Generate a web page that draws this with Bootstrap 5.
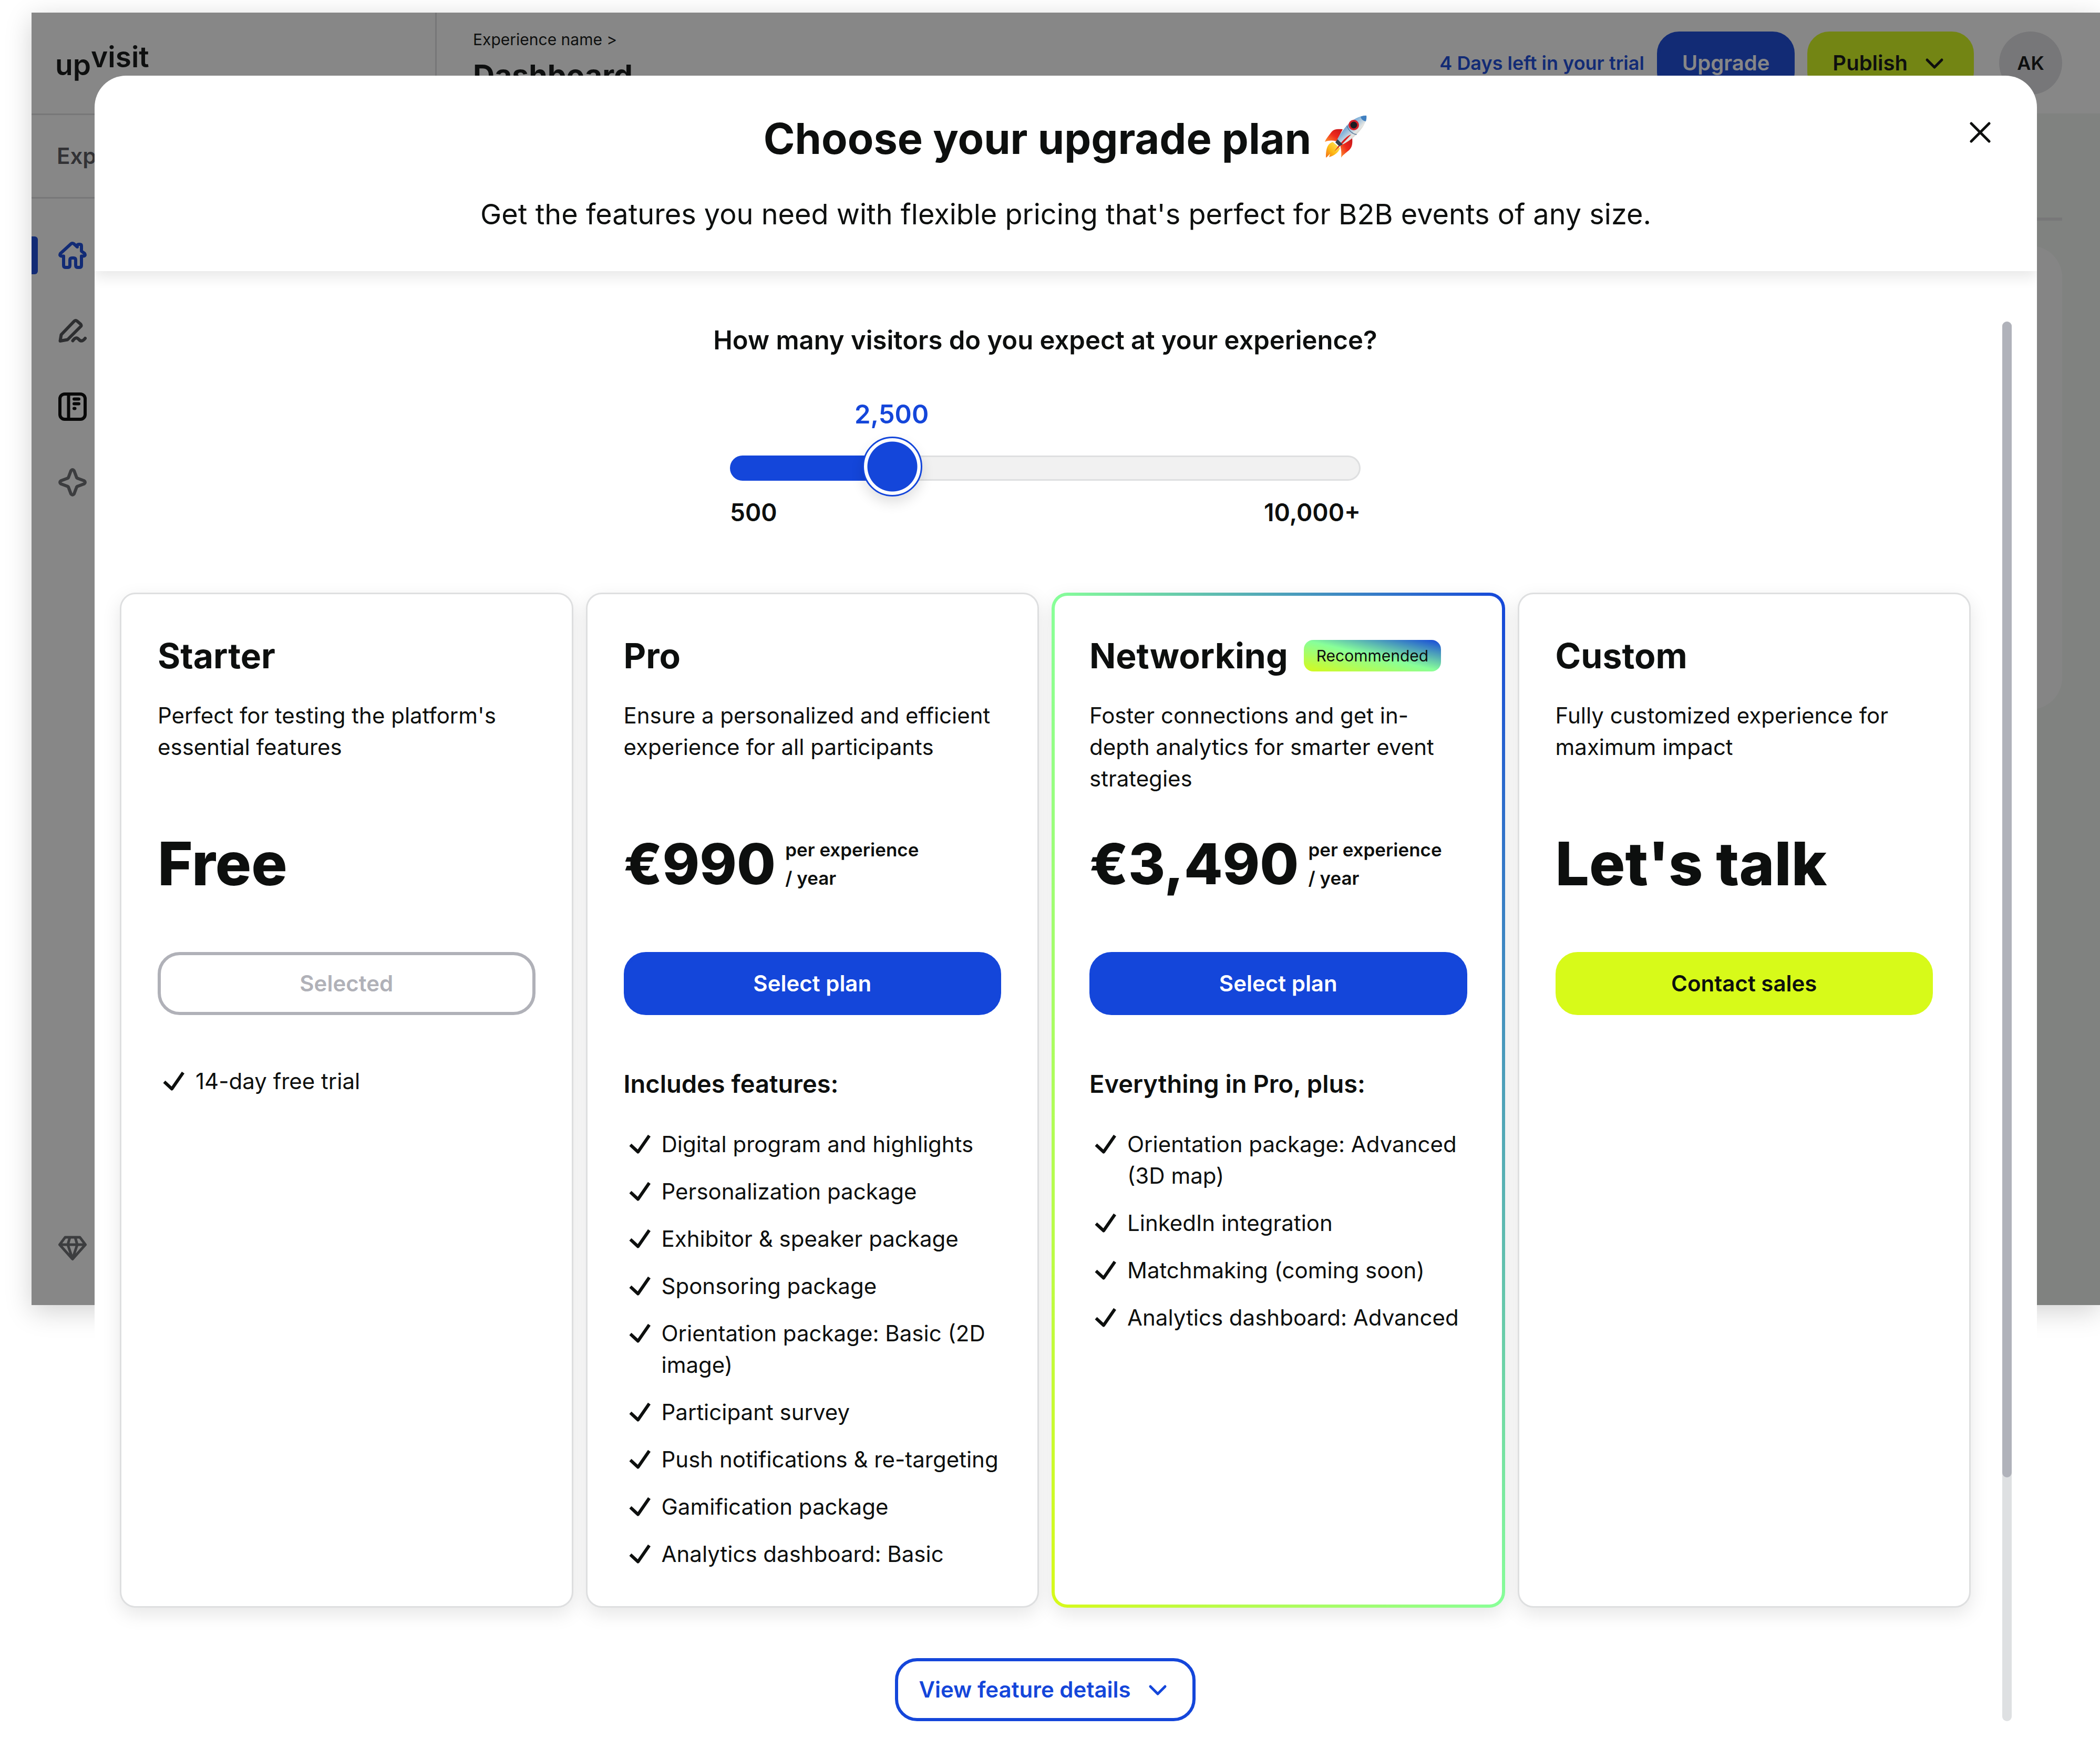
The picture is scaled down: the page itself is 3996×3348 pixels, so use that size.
<!DOCTYPE html>
<html lang="en">
<head>
<meta charset="utf-8">
<meta name="viewport" content="width=device-width, initial-scale=1">
<title>upvisit – Choose your upgrade plan</title>
<link rel="stylesheet" href="https://cdn.jsdelivr.net/npm/bootstrap@5.3.0/dist/css/bootstrap.min.css">
<script defer src="https://cdn.jsdelivr.net/npm/bootstrap@5.3.0/dist/js/bootstrap.bundle.min.js"></script>
<style>
  :root {
    --ink: #0d0f0e;
    --blue: #1446da;
    --lime: #d7fa19;
    --mint: #88ff99;
    --line: #dedfe0;
    --muted: #b0b1b8;
    --brand-gradient: linear-gradient(to top right, var(--lime), var(--mint) 50%, var(--blue));
  }
  body {
    font-family: Inter, "Liberation Sans", sans-serif;
    font-size: 42px;
    line-height: 60px;
    color: var(--ink);
    background: #fff;
  }
  svg { display: block; flex: none; fill: none; stroke: currentColor; stroke-width: 6; stroke-linecap: round; stroke-linejoin: round; }
  .rocket { stroke: none; }
  h1, h2, h3, p, ul { margin: 0; }

  /* The dashboard and the dialog share one grid cell, the dialog on top. */
  .stage { display: grid; overflow: hidden; }
  .stage > * { grid-area: 1 / 1; min-width: 0; }

  /* Dashboard behind the dialog */
  .app-frame {
    position: relative;
    align-self: start;
    min-height: 2460px;
    margin: 24px 0 0 60px;
    box-shadow: 0 12px 48px rgba(0, 0, 0, .18);
    background: #f0f4f0;
  }
  .app-dim { position: absolute; inset: 0; background: rgba(16, 16, 16, .5); }
  .side { width: 771px; background: #fff; border-right: 3px solid var(--line); }
  .side-brand { height: 195px; padding: 48px 45px; border-bottom: 3px solid var(--line); }
  .brand { font-size: 55px; font-weight: 600; line-height: 72px; color: var(--ink); text-decoration: none; }
  .brand-up { vertical-align: 15px; }
  .side-project { height: 159px; padding: 48px; border-bottom: 3px solid var(--line); font-weight: 600; color: #55555b; }
  .side-nav { gap: 72px; padding: 72px 0; }
  .side-link { display: flex; align-items: center; height: 72px; padding-left: 51px; color: #696a6f; }
  .side-link.current { color: var(--blue); padding-left: 39px; }
  .side-link.current::before { content: ""; width: 12px; height: 72px; margin-left: -39px; margin-right: 39px; border-radius: 0 6px 6px 0; background: currentColor; }
  .side-link.dark { color: #000; }
  .side-link.edit { color: #4b4c50; }
  .topbar { height: 192px; padding: 30px 72px 0 69px; background: #fff; }
  .crumb { font-size: 30px; line-height: 42px; color: var(--ink); text-decoration: none; }
  .page-title { margin-top: 12px; font-size: 57px; line-height: 72px; font-weight: 700; }
  .top-actions { gap: 24px; padding-top: 6px; }
  .trial { font-size: 36px; font-weight: 600; color: var(--blue); text-decoration: none; }
  .avatar { width: 120px; height: 120px; margin-left: 24px; padding: 0; border: 0; border-radius: 50%; background: #dedee2; font-size: 36px; font-weight: 600; color: var(--ink); }
  .tab-rule { height: 6px; margin-top: 198px; background: var(--line); }
  .dash-pane { padding: 0 72px 0 69px; }
  .dash-panel { height: 882px; margin-top: 48px; border-radius: 60px; background: #fbfbfb; }

  /* Buttons */
  .pill {
    --bs-btn-font-size: 42px;
    --bs-btn-line-height: 60px;
    --bs-btn-font-weight: 600;
    --bs-btn-border-width: 6px;
    --bs-btn-border-radius: 42px;
    --bs-btn-padding-x: 42px;
    --bs-btn-padding-y: 24px;
    --bs-btn-disabled-opacity: 1;
  }
  .pill-top { --bs-btn-font-size: 40px; }
  .pill-blue { --bs-btn-color: #fff; --bs-btn-bg: var(--blue); --bs-btn-border-color: var(--blue); --bs-btn-hover-color: #fff; --bs-btn-hover-bg: #1039b4; }
  .pill-lime { --bs-btn-color: var(--ink); --bs-btn-bg: var(--lime); --bs-btn-border-color: var(--lime); --bs-btn-hover-bg: #c6e80e; }
  .pill-outline { --bs-btn-padding-x: 39px; --bs-btn-color: var(--blue); --bs-btn-bg: #fff; --bs-btn-border-color: var(--blue); --bs-btn-hover-color: #fff; --bs-btn-hover-bg: var(--blue); }
  .pill-chosen { --bs-btn-disabled-color: var(--muted); --bs-btn-disabled-bg: #fff; --bs-btn-disabled-border-color: var(--muted); }
  .with-icon { display: inline-flex; align-items: center; gap: 24px; }

  /* Dialog */
  .plan-dialog { z-index: 1; margin: 144px 120px 0 180px; border-radius: 60px 60px 0 0; background: #fff; overflow: hidden; }
  .dialog-head { position: relative; padding: 72px 72px 66px; text-align: center; box-shadow: 0 12px 24px rgba(0, 0, 0, .09); }
  .dialog-title { gap: 24px; font-size: 81px; line-height: 96px; font-weight: 700; }
  .dialog-sub { margin-top: 54px; font-size: 54px; line-height: 84px; }
  .close-x { position: absolute; top: 72px; right: 72px; padding: 0; border: 0; background: none; color: var(--ink); }
  .dialog-main { gap: 60px; padding: 96px 48px 72px; }
  .scroll-rail { width: 18px; border-radius: 9px; background: #dee0e2; }
  .scroll-grip { border-radius: 9px; background: #b0b2ba; }

  /* Visitor slider */
  .visitors { max-width: 1200px; margin: 72px auto 126px; }
  .question { font-size: 49px; line-height: 72px; font-weight: 600; text-align: center; }
  .visitor-value { display: block; width: 150px; margin-bottom: 12px; margin-left: calc((100% - 114px) * var(--at) - 18px); font-size: 49px; line-height: 66px; font-weight: 600; text-align: center; color: var(--blue); }
  .visitor-range { display: block; width: 100%; height: 114px; margin: 0; background: none; -webkit-appearance: none; appearance: none; }
  .visitor-range::-webkit-slider-runnable-track {
    height: 48px; border: 3px solid transparent; border-radius: 24px;
    background:
      linear-gradient(var(--blue), var(--blue)) 0 0 / calc(57px + (100% - 114px) * var(--at)) 100% no-repeat border-box,
      linear-gradient(#f1f1f1, #f1f1f1) padding-box,
      linear-gradient(var(--line), var(--line)) border-box;
  }
  .visitor-range::-webkit-slider-thumb {
    -webkit-appearance: none; width: 114px; height: 114px; margin-top: -39px; border: 3px solid var(--blue); border-radius: 50%;
    background: radial-gradient(circle, var(--blue) 47px, #fff 48px); box-shadow: 0 12px 24px rgba(0, 0, 0, .12);
  }
  .visitor-ends { font-size: 46px; line-height: 54px; font-weight: 600; }

  /* Plans */
  .plans { --bs-gutter-x: 24px; }
  .plan { height: 100%; padding: 69px; border: 3px solid var(--line); border-radius: 30px; background: #fff; box-shadow: 0 12px 36px rgba(0, 0, 0, .1); }
  .plan-featured { padding: 66px; border: 6px solid transparent; background: linear-gradient(#fff, #fff) padding-box, var(--brand-gradient) border-box; }
  .plan-top { gap: 30px; }
  .plan-name { font-size: 66px; line-height: 96px; font-weight: 700; }
  .plan-tag { padding: 0 24px; border-radius: 18px; background: var(--brand-gradient); font-size: 30px; line-height: 60px; }
  .plan-text { min-height: 180px; margin-top: 36px; }
  .plan-price { gap: 18px; height: 144px; margin: 60px 0 96px; }
  .price-word { font-size: 114px; line-height: 144px; font-weight: 800; }
  .price-sum { font-size: 107px; line-height: 144px; font-weight: 800; }
  .price-unit { font-size: 35px; line-height: 54px; font-weight: 600; }
  .plan-list-title { margin: 96px 0 -45px; font-size: 47px; line-height: 69px; font-weight: 600; }
  .plan-list { display: grid; gap: 30px; margin-top: 96px; }
  .plan-list li { display: flex; gap: 12px; }
  .plan-more { padding-top: 96px; text-align: center; }
</style>
</head>
<body>

<svg class="d-none" aria-hidden="true">
  <symbol id="tick" viewBox="0 0 60 60"><path d="M12.500 31 L27 44.500 L48.500 13.500" stroke-linecap="butt" stroke-linejoin="round"/></symbol>
  <symbol id="chevron" viewBox="0 0 54 54"><path d="M13 21 L27 35 L41 21" stroke-width="5"/></symbol>
</svg>

<div class="stage">

  <div class="app-frame d-flex" inert>
    <aside class="side d-flex flex-column flex-shrink-0">
      <div class="side-brand"><a class="brand" href="#">up<span class="brand-up">visit</span></a></div>
      <div class="side-project">Experience name</div>
      <nav class="side-nav d-flex flex-column flex-grow-1" aria-label="Main">
        <a class="side-link current" href="#" aria-label="Home">
          <svg width="54" height="54" viewBox="0 0 54 54"><path d="M24.500 4.800 L4 23.500 q-2.500 4.500 2 5 H10 V46 q0 4 4 4 h4 q4 0 4-4 V36 q0-4 4-4 h3 q4 0 4 4 v10 q0 4 4 4 h3 q4 0 4-4 V28.500 h4 q4.500-.5 2-5 L44 19 V9 q0-3-3-3 h-2 q-3 0-3 3 v2 L29.500 5 q-2.500-1.800-5-.2z"/></svg>
        </a>
        <a class="side-link edit" href="#" aria-label="Edit">
          <svg width="54" height="54" viewBox="0 0 54 54"><path d="M3.500 46 L5.500 34 L30.500 8 q2.500-2 5 0 l7 6 q2 2.500 0 4.500 L17.500 43.500 Z M27.500 45.500 q6-9 11.500-2.500 t12-2"/></svg>
        </a>
        <a class="side-link dark" href="#" aria-label="Pages">
          <svg width="54" height="54" viewBox="0 0 54 54"><rect x="3" y="3" width="48" height="48" rx="9"/><path d="M19.500 3 V51 M30 12.500 H39 M30 21.500 H39 M30 30.500 H31.500"/></svg>
        </a>
        <a class="side-link" href="#" aria-label="Highlights">
          <svg width="54" height="54" viewBox="0 0 54 54"><path d="M24 5 Q27 1 30 5 L34.500 17 Q35 19 37 19.500 L49 24 Q53 27 49 30 L37 34.500 Q35 35 34.500 37 L30 49 Q27 53 24 49 L19.500 37 Q19 35 17 34.500 L5 30 Q1 27 5 24 L17 19.500 Q19 19 19.500 17 Z"/></svg>
        </a>
        <a class="side-link mt-auto" href="#" aria-label="Plans">
          <svg width="54" height="54" viewBox="0 0 54 54"><path stroke-width="5" d="M13 6 H41 L51.500 20 L27 47.500 L2.500 20 Z M2.500 20 H51.500 M22 6 L18 20 L27 47 L36 20 L32 6"/></svg>
        </a>
      </nav>
    </aside>
    <div class="flex-grow-1">
      <header class="topbar d-flex justify-content-between">
        <div>
          <a class="crumb d-block" href="#">Experience name &gt;</a>
          <h2 class="page-title">Dashboard</h2>
        </div>
        <div class="top-actions d-flex align-items-center align-self-start">
          <a class="trial" href="#">4 Days left in your trial</a>
          <button type="button" class="btn pill pill-top pill-blue">Upgrade</button>
          <button type="button" class="btn pill pill-top pill-lime with-icon">Publish <svg width="54" height="54" aria-hidden="true"><use href="#chevron"/></svg></button>
          <button type="button" class="avatar" aria-label="Account">AK</button>
        </div>
      </header>
      <div class="dash-pane">
        <div class="tab-rule"></div>
        <div class="dash-panel"></div>
      </div>
    </div>
    <div class="app-dim"></div>
  </div>

  <div class="plan-dialog" role="dialog" aria-modal="true" aria-labelledby="dialogTitle">
    <header class="dialog-head">
      <h1 class="dialog-title d-flex justify-content-center align-items-center" id="dialogTitle">Choose your upgrade plan
        <svg class="rocket" width="84" height="96" viewBox="0 0 84 96" role="img" aria-label="Rocket">
          <defs>
            <linearGradient id="hull" x1="0" y1="0" x2="1" y2="1"><stop offset=".15" stop-color="#2f74b5"/><stop offset=".42" stop-color="#8fb9dc"/><stop offset=".6" stop-color="#e6e6e2"/><stop offset=".85" stop-color="#8b8d8a"/></linearGradient>
            <linearGradient id="flame" x1="1" y1="0" x2="0" y2="1"><stop offset="0" stop-color="#ffef6a"/><stop offset=".6" stop-color="#fdb813"/><stop offset="1" stop-color="#f26a1b"/></linearGradient>
            <linearGradient id="fin" x1="1" y1="0" x2="0" y2="1"><stop offset="0" stop-color="#c4141a"/><stop offset=".5" stop-color="#ee2a1c"/><stop offset="1" stop-color="#ff9a2e"/></linearGradient>
          </defs>
          <path d="M17 54 C7 58 4 66 4 84 C8 82 9 79 12 77 L10 83 C22 79 28 74 31 66 Z" fill="url(#flame)"/>
          <path d="M36 30 C24 29 18 30 14 36 C9 43 4 48 2 54 C10 51 16 51 24 53 Z" fill="url(#fin)"/>
          <path d="M54 46 C55 58 54 64 48 70 C41 76 36 79 33 84 C34 74 33 68 31 60 Z" fill="url(#fin)"/>
          <path d="M81 4 C68 4 54 11 43 24 C36 32 28 43 24 54 L31 61 C43 56 53 49 62 40 C74 28 82 16 81 4 Z" fill="url(#hull)"/>
          <path d="M70 6 Q72 14 80 15 Q82 8 81 4 Q76 3.500 70 6 Z" fill="#3f7fc0"/>
          <path d="M44 24 Q50 38 62 40" fill="none" stroke="#56789a" stroke-width="1.500"/>
          <ellipse cx="57" cy="22" rx="10" ry="10" fill="#d5202a"/>
          <circle cx="57" cy="22" r="6.500" fill="#1b1c22"/>
          <path d="M52 40 Q42 42 20 72 Q34 60 52 40 Z" fill="#d81f1f"/>
          <path d="M26 49 L36 59 L29 62 L22 55 Z" fill="#33404d"/>
        </svg>
      </h1>
      <p class="dialog-sub">Get the features you need with flexible pricing that's perfect for B2B events of any size.</p>
      <button type="button" class="close-x" aria-label="Close">
        <svg width="72" height="72" viewBox="0 0 72 72"><path d="M19 19 L53 53 M53 19 L19 53" stroke-width="5"/></svg>
      </button>
    </header>

    <div class="dialog-main d-flex">
      <div class="flex-grow-1">
        <label class="question d-block" for="visitorRange">How many visitors do you expect at your experience?</label>
        <div class="visitors" style="--at: .2308">
          <output class="visitor-value" for="visitorRange">2,500</output>
          <input class="visitor-range" id="visitorRange" type="range" min="0" max="13" value="3" aria-valuetext="2,500">
          <div class="visitor-ends d-flex justify-content-between"><span>500</span><span>10,000+</span></div>
        </div>

        <div class="row row-cols-4 plans">
          <div class="col">
            <section class="plan">
              <h2 class="plan-name">Starter</h2>
              <p class="plan-text">Perfect for testing the platform's essential features</p>
              <div class="plan-price d-flex align-items-center"><span class="price-word">Free</span></div>
              <button type="button" class="btn pill pill-chosen w-100" disabled>Selected</button>
              <ul class="plan-list list-unstyled">
                <li><svg width="60" height="60" aria-hidden="true"><use href="#tick"/></svg>14-day free trial</li>
              </ul>
            </section>
          </div>
          <div class="col">
            <section class="plan">
              <h2 class="plan-name">Pro</h2>
              <p class="plan-text">Ensure a personalized and efficient experience for all participants</p>
              <div class="plan-price d-flex align-items-center"><span class="price-sum">€990</span><span class="price-unit">per experience<br>/ year</span></div>
              <button type="button" class="btn pill pill-blue w-100">Select plan</button>
              <h3 class="plan-list-title">Includes features:</h3>
              <ul class="plan-list list-unstyled">
                <li><svg width="60" height="60" aria-hidden="true"><use href="#tick"/></svg>Digital program and highlights</li>
                <li><svg width="60" height="60" aria-hidden="true"><use href="#tick"/></svg>Personalization package</li>
                <li><svg width="60" height="60" aria-hidden="true"><use href="#tick"/></svg>Exhibitor &amp; speaker package</li>
                <li><svg width="60" height="60" aria-hidden="true"><use href="#tick"/></svg>Sponsoring package</li>
                <li><svg width="60" height="60" aria-hidden="true"><use href="#tick"/></svg>Orientation package: Basic (2D image)</li>
                <li><svg width="60" height="60" aria-hidden="true"><use href="#tick"/></svg>Participant survey</li>
                <li><svg width="60" height="60" aria-hidden="true"><use href="#tick"/></svg>Push notifications &amp; re-targeting</li>
                <li><svg width="60" height="60" aria-hidden="true"><use href="#tick"/></svg>Gamification package</li>
                <li><svg width="60" height="60" aria-hidden="true"><use href="#tick"/></svg>Analytics dashboard: Basic</li>
              </ul>
            </section>
          </div>
          <div class="col">
            <section class="plan plan-featured">
              <div class="plan-top d-flex align-items-center"><h2 class="plan-name">Networking</h2><span class="plan-tag">Recommended</span></div>
              <p class="plan-text">Foster connections and get in-depth analytics for smarter event strategies</p>
              <div class="plan-price d-flex align-items-center"><span class="price-sum">€3,490</span><span class="price-unit">per experience<br>/ year</span></div>
              <button type="button" class="btn pill pill-blue w-100">Select plan</button>
              <h3 class="plan-list-title">Everything in Pro, plus:</h3>
              <ul class="plan-list list-unstyled">
                <li><svg width="60" height="60" aria-hidden="true"><use href="#tick"/></svg>Orientation package: Advanced (3D map)</li>
                <li><svg width="60" height="60" aria-hidden="true"><use href="#tick"/></svg>LinkedIn integration</li>
                <li><svg width="60" height="60" aria-hidden="true"><use href="#tick"/></svg>Matchmaking (coming soon)</li>
                <li><svg width="60" height="60" aria-hidden="true"><use href="#tick"/></svg>Analytics dashboard: Advanced</li>
              </ul>
            </section>
          </div>
          <div class="col">
            <section class="plan">
              <h2 class="plan-name">Custom</h2>
              <p class="plan-text">Fully customized experience for maximum impact</p>
              <div class="plan-price d-flex align-items-center"><span class="price-word">Let's talk</span></div>
              <button type="button" class="btn pill pill-lime w-100">Contact sales</button>
            </section>
          </div>
        </div>

        <div class="plan-more">
          <button type="button" class="btn pill pill-outline with-icon">View feature details <svg width="54" height="54" aria-hidden="true"><use href="#chevron"/></svg></button>
        </div>
      </div>
      <div class="scroll-rail flex-shrink-0" aria-hidden="true"><div class="scroll-grip" style="height: 82.6%"></div></div>
    </div>
  </div>
</div>
</body>
</html>
